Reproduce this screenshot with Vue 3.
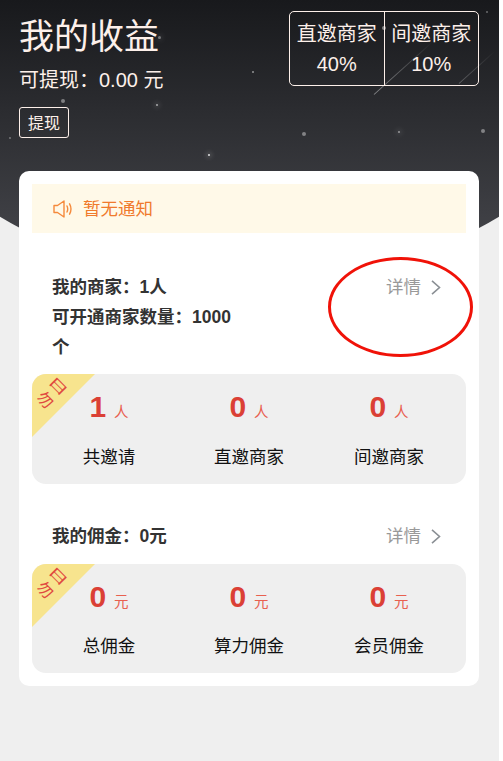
<script setup>
const stars = [
  { x: 63, y: 101, s: 4, o: 0.4 },
  { x: 157, y: 105, s: 2, o: 0.6, glow: true },
  { x: 10, y: 138, s: 2, o: 0.35 },
  { x: 209, y: 155, s: 2, o: 0.85, glow: true },
  { x: 253, y: 72, s: 2, o: 0.5 },
  { x: 304, y: 134, s: 4, o: 0.4 },
  { x: 384, y: 28, s: 4, o: 0.45 },
  { x: 399, y: 132, s: 2, o: 0.5, glow: true },
  { x: 483, y: 131, s: 4, o: 0.4 },
  { x: 487, y: 12, s: 2, o: 0.35 },
  { x: 159, y: 37, s: 3, o: 0.4, glow: true }
]
const starStyle = (s) => ({
  left: s.x - s.s / 2 + 'px',
  top: s.y - s.s / 2 + 'px',
  width: s.s + 'px',
  height: s.s + 'px',
  opacity: s.o
})
const merchants = [
  { n: '1', u: '人', l: '共邀请' },
  { n: '0', u: '人', l: '直邀商家' },
  { n: '0', u: '人', l: '间邀商家' }
]
const commissions = [
  { n: '0', u: '元', l: '总佣金' },
  { n: '0', u: '元', l: '算力佣金' },
  { n: '0', u: '元', l: '会员佣金' }
]
</script>

<template>
  <div class="page">
    <header class="hero">
      <i v-for="(s, i) in stars" :key="i" class="star" :class="{ glow: s.glow }" :style="starStyle(s)"></i>
      <i class="streak streak-a"></i>
      <i class="streak streak-b"></i>
      <div class="hero-row">
        <div class="earn">
          <div class="title">我的收益</div>
          <div class="avail">可提现：0.00 元</div>
          <button class="withdraw">提现</button>
        </div>
        <div class="rates">
          <div class="rate"><div>直邀商家</div><div>40%</div></div>
          <div class="rate"><div>间邀商家</div><div>10%</div></div>
        </div>
      </div>
    </header>

    <main class="card">
      <div class="notice">
        <svg class="speaker" width="19" height="18" viewBox="0 0 19 18" fill="none" stroke="#f58a3c" stroke-width="1.4">
          <path d="M1 5.5h3.5L11 1v16l-6.5-4.5H1z" stroke-linejoin="round" />
          <path d="M14 6c.9 1.9.9 4.1 0 6M16.6 3.8c1.7 3.2 1.7 7.2 0 10.4" stroke-linecap="round" />
        </svg>
        <span>暂无通知</span>
      </div>

      <section class="head head-first">
        <div class="head-text">
          <div>我的商家：1人</div>
          <div>可开通商家数量：1000个</div>
        </div>
        <div class="more">
          <span>详情</span>
          <svg width="10" height="15" viewBox="0 0 10 15" fill="none" stroke="#8a8f94" stroke-width="1.6"><path d="M1 .8l7.5 6.7L1 14.2" /></svg>
        </div>
        <i class="ring"></i>
      </section>
      <div class="panel">
        <div class="ribbon"><div class="mark"><span class="mark-top">日</span><span class="mark-low">勿</span></div></div>
        <div v-for="m in merchants" :key="m.l" class="stat">
          <div class="value"><b>{{ m.n }}</b><small>{{ m.u }}</small></div>
          <div class="label">{{ m.l }}</div>
        </div>
      </div>

      <section class="head head-second">
        <div class="head-text"><div>我的佣金：0元</div></div>
        <div class="more">
          <span>详情</span>
          <svg width="10" height="15" viewBox="0 0 10 15" fill="none" stroke="#8a8f94" stroke-width="1.6"><path d="M1 .8l7.5 6.7L1 14.2" /></svg>
        </div>
      </section>
      <div class="panel panel-low">
        <div class="ribbon"><div class="mark"><span class="mark-top">日</span><span class="mark-low">勿</span></div></div>
        <div v-for="c in commissions" :key="c.l" class="stat">
          <div class="value"><b>{{ c.n }}</b><small>{{ c.u }}</small></div>
          <div class="label">{{ c.l }}</div>
        </div>
      </div>
    </main>
  </div>
</template>

<style>
html, body { margin: 0; background: #fff; }
</style>

<style scoped>
.page {
  width: 499px;
  height: 761px;
  background: #efefef;
  overflow: hidden;
  font-family: "Liberation Sans", "Noto Sans CJK SC", sans-serif;
}
.hero {
  position: relative;
  height: 286px;
  box-sizing: border-box;
  padding: 11px 20px 0 19px;
  background: linear-gradient(180deg, #18191c 0, #404146 230px);
  clip-path: circle(484px at 249.5px -198px);
  color: #fdf0ea;
}
.star {
  position: absolute;
  border-radius: 50%;
  background: #fff;
}
.star.glow { box-shadow: 0 0 5px 2px rgba(255, 255, 255, 0.2); }
.streak {
  position: absolute;
  height: 1px;
  background: linear-gradient(90deg, rgba(255, 255, 255, 0.45), rgba(255, 255, 255, 0));
  transform-origin: left center;
}
.streak-a { left: 374px; top: 94px; width: 78px; transform: rotate(-42deg); }
.streak-b { left: 459px; top: 83px; width: 48px; transform: rotate(-42deg); opacity: 0.6; }
.hero-row {
  position: relative;
  display: flex;
  justify-content: space-between;
  align-items: flex-start;
}
.title { font-size: 35px; line-height: 50px; margin-top: 1px; }
.avail { font-size: 20px; line-height: 30px; margin-top: 3px; }
.withdraw {
  display: block;
  margin-top: 12px;
  width: 50px;
  height: 31px;
  padding: 0 0 1px;
  background: transparent;
  border: 1px solid #fdf0ea;
  border-radius: 3px;
  color: #fdf0ea;
  font: 16px "Liberation Sans", "Noto Sans CJK SC", sans-serif;
}
.rates {
  display: flex;
  width: 190px;
  height: 75px;
  box-sizing: border-box;
  border: 1px solid #fdf0ea;
  border-radius: 5px;
  font-size: 20px;
  text-align: center;
}
.rate { flex: 1; padding-top: 7px; line-height: 30px; }
.rate + .rate { border-left: 1px solid #fdf0ea; }

.card {
  position: relative;
  width: 460px;
  height: 515px;
  box-sizing: border-box;
  margin: -115px 0 0 19px;
  padding: 13px;
  background: #fff;
  border-radius: 10px;
}
.notice {
  display: flex;
  align-items: center;
  gap: 11px;
  height: 49px;
  padding-left: 21px;
  background: #fff9e8;
  color: #f07a2c;
  font-size: 17.5px;
  line-height: 48px;
}
.head {
  position: relative;
  display: flex;
  justify-content: space-between;
  align-items: flex-start;
  padding: 0 25px 0 20px;
  font-size: 17.5px;
  line-height: 30px;
  font-weight: 700;
  color: #333;
}
.head-first { margin-top: 39px; height: 102px; }
.head-second { margin-top: 37px; height: 43px; }
.head-text { width: 190px; }
.more {
  display: flex;
  align-items: center;
  gap: 10px;
  height: 30px;
  font-size: 17.5px;
  font-weight: 400;
  color: #999;
}
.ring {
  position: absolute;
  left: 296px;
  top: -15px;
  width: 145px;
  height: 100px;
  box-sizing: border-box;
  border: 3px solid #f01208;
  border-radius: 50%;
}
.panel {
  position: relative;
  display: flex;
  height: 110px;
  padding: 0 7px;
  background: #efefef;
  border-radius: 14px;
  overflow: hidden;
}
.panel-low { height: 109px; }
.ribbon {
  position: absolute;
  left: 0;
  top: 0;
  width: 63px;
  height: 63px;
  background: #f7e48e;
  clip-path: polygon(0 0, 100% 0, 0 100%);
}
.mark {
  position: absolute;
  left: 9px;
  top: 2px;
  width: 20px;
  height: 36px;
  display: flex;
  flex-direction: column;
  align-items: center;
  color: #e0483e;
  transform: rotate(45deg);
}
.mark-top { font-size: 19px; line-height: 16px; height: 16px; transform: scale(1.12, 0.68); }
.mark-low { font-size: 16px; line-height: 16px; height: 16px; margin-top: 3px; }
.stat { flex: 1; text-align: center; padding-top: 16px; }
.value { height: 34px; display: flex; justify-content: center; align-items: baseline; gap: 8px; line-height: 34px; color: #db4035; }
.value b { font-size: 30px; }
.value small { font-size: 14.5px; color: #e8604f; }
.label { margin-top: 21px; font-size: 17.5px; line-height: 24px; color: #111; }
.panel-low .label { margin-top: 20px; }
</style>
